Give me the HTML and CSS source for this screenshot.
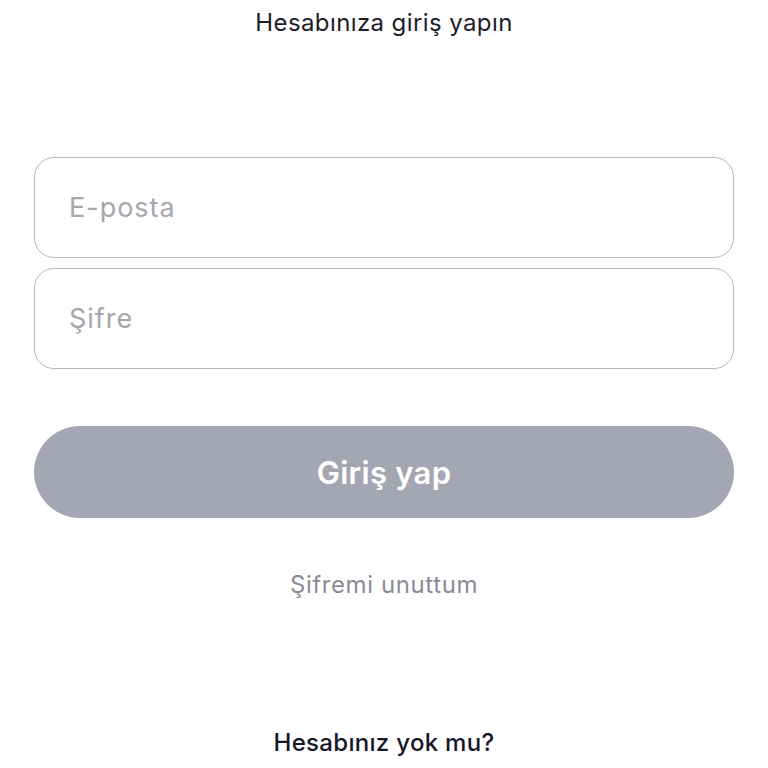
FILE: index.html
```html
<!DOCTYPE html>
<html lang="tr">
<head>
<meta charset="utf-8">
<link rel="stylesheet" href="styles.css">
</head>
<body>
<main class="page">
  <h1 class="title">Hesabınıza giriş yapın</h1>
  <form class="form">
    <div class="field"><span class="placeholder">E-posta</span></div>
    <div class="field"><span class="placeholder">Şifre</span></div>
    <button type="button" class="btn">Giriş yap</button>
  </form>
  <p class="forgot">Şifremi unuttum</p>
  <p class="signup">Hesabınız yok mu?</p>
</main>
</body>
</html>
```
FILE: styles.css
```css
html, body {
  margin: 0;
  padding: 0;
  background: #ffffff;
}
body {
  font-family: "Inter", "Lato", sans-serif;
  width: 768px;
  height: 768px;
  overflow: hidden;
}
.page {
  display: flex;
  flex-direction: column;
  align-items: center;
  padding: 0 34px;
}
.title {
  margin: 6px 0 0;
  font-size: 24px;
  font-weight: 400;
  letter-spacing: 0.4px;
  color: #1c1d2b;
  line-height: 34px;
}
.form {
  width: 700px;
  display: flex;
  flex-direction: column;
  gap: 10px;
  margin-top: 117px;
}
.field {
  height: 101px;
  box-sizing: border-box;
  border: 1px solid #b9b9be;
  border-radius: 20px;
  display: flex;
  align-items: center;
  padding-left: 34px;
}
.placeholder {
  font-size: 27px;
  letter-spacing: 1px;
  color: #a6a6ae;
}
.btn {
  margin-top: 47px;
  height: 92px;
  border: none;
  border-radius: 46px;
  background: #a4a6b3;
  color: #ffffff;
  font-family: inherit;
  font-size: 31px;
  font-weight: 600;
  letter-spacing: 0.3px;
}
.forgot {
  margin: 51px 0 0;
  font-size: 24px;
  letter-spacing: 0.6px;
  color: #8b8b95;
  line-height: 32px;
}
.signup {
  margin: 126px 0 0;
  font-size: 24px;
  font-weight: 500;
  letter-spacing: 0.3px;
  color: #15162a;
  line-height: 32px;
}
```
